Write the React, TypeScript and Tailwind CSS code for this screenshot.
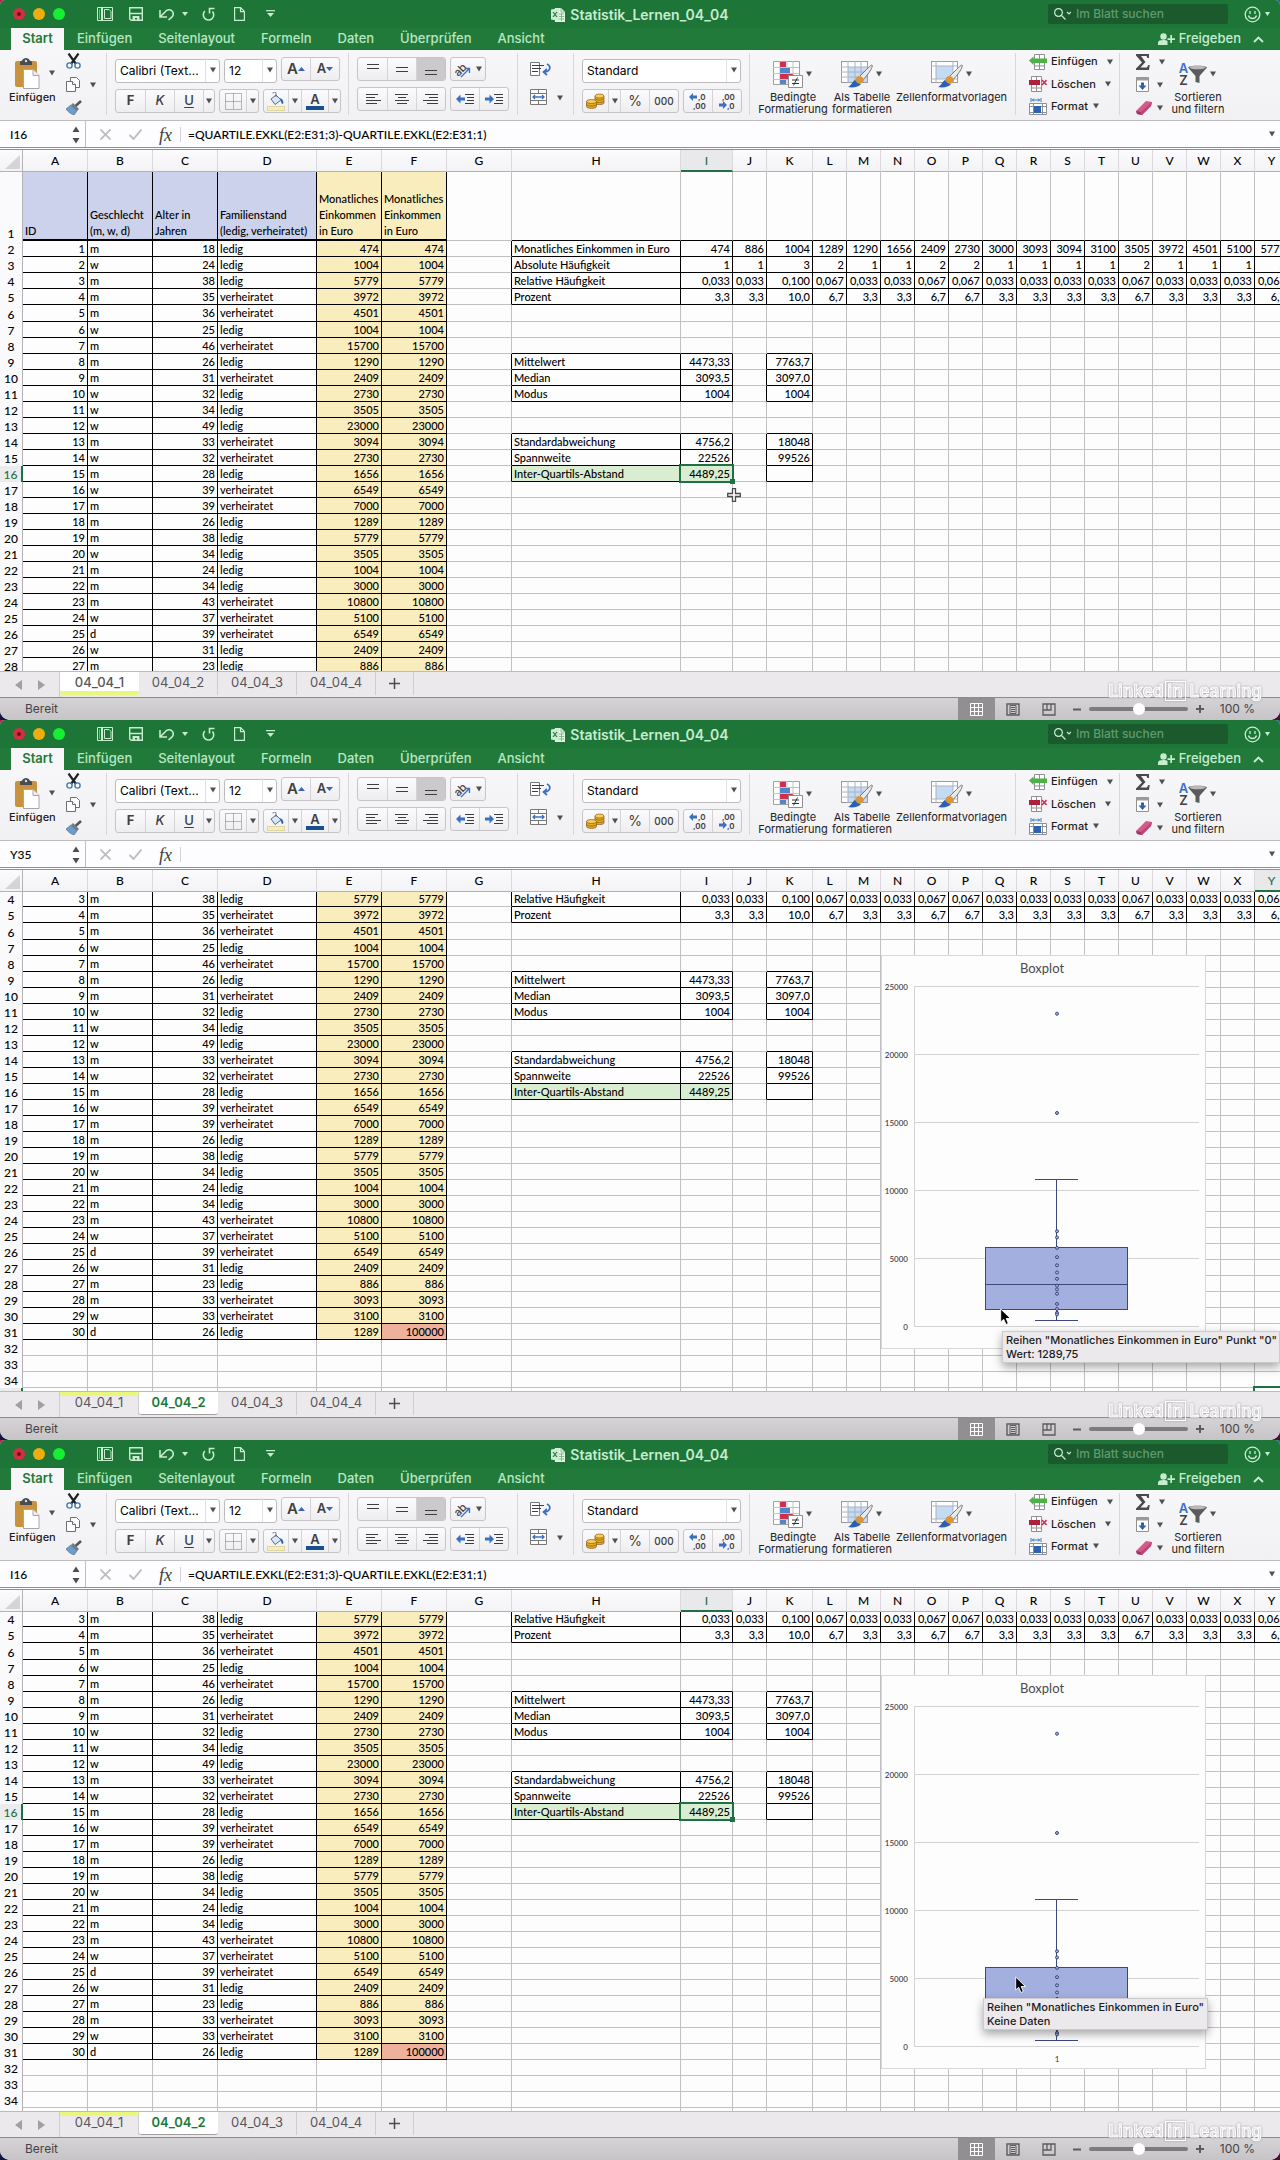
import type { ReactNode } from "react";

type Tip = { lines: string[]; className: string };

type WindowState = {
  nameBox: string;
  formula: string;
  firstRow: number;
  lastRow: number;
  selected: { col: string; row: number };
  activeTab: string;
  showChart: boolean;
  tip?: Tip;
  cursor: ReactNode;
};

type CellData = {
  text?: string | number;
  align?: "left" | "right";
  fill?: "blue" | "yellow" | "green" | "red";
  boxed?: boolean;
};

const columns = [
  { id: "A", width: 65 },
  { id: "B", width: 65 },
  { id: "C", width: 65 },
  { id: "D", width: 99 },
  { id: "E", width: 65 },
  { id: "F", width: 65 },
  { id: "G", width: 65 },
  { id: "H", width: 169 },
  { id: "I", width: 52 },
  { id: "J", width: 34 },
  { id: "K", width: 46 },
  ..."LMNOPQRSTUVWXY".split("").map((id) => ({ id, width: 34 })),
];

const people: [string, number, string, number][] = [
  ["m", 18, "ledig", 474],
  ["w", 24, "ledig", 1004],
  ["m", 38, "ledig", 5779],
  ["m", 35, "verheiratet", 3972],
  ["m", 36, "verheiratet", 4501],
  ["w", 25, "ledig", 1004],
  ["m", 46, "verheiratet", 15700],
  ["m", 26, "ledig", 1290],
  ["m", 31, "verheiratet", 2409],
  ["w", 32, "ledig", 2730],
  ["w", 34, "ledig", 3505],
  ["w", 49, "ledig", 23000],
  ["m", 33, "verheiratet", 3094],
  ["w", 32, "verheiratet", 2730],
  ["m", 28, "ledig", 1656],
  ["w", 39, "verheiratet", 6549],
  ["m", 39, "verheiratet", 7000],
  ["m", 26, "ledig", 1289],
  ["m", 38, "ledig", 5779],
  ["w", 34, "ledig", 3505],
  ["m", 24, "ledig", 1004],
  ["m", 34, "ledig", 3000],
  ["m", 43, "verheiratet", 10800],
  ["w", 37, "verheiratet", 5100],
  ["d", 39, "verheiratet", 6549],
  ["w", 31, "ledig", 2409],
  ["m", 23, "ledig", 886],
  ["m", 33, "verheiratet", 3093],
  ["w", 33, "verheiratet", 3100],
  ["d", 26, "ledig", 1289],
];

const incomes = [
  474, 886, 1004, 1289, 1290, 1656, 2409, 2730, 3000, 3093, 3094, 3100, 3505,
  3972, 4501, 5100, 5779,
];
const counts = [1, 1, 3, 2, 1, 1, 2, 2, 1, 1, 1, 1, 2, 1, 1, 1, 2];
const shares = ["", "0,033", "0,067", "0,100"];
const percents = ["", "3,3", "6,7", "10,0"];

function buildCells() {
  const cells: Record<string, CellData> = {};

  const headers = [
    "ID",
    "Geschlecht\n(m, w, d)",
    "Alter in\nJahren",
    "Familienstand\n(ledig, verheiratet)",
    "Monatliches\nEinkommen\nin Euro",
    "Monatliches\nEinkommen\nin Euro",
  ];
  headers.forEach((text, i) => {
    cells[`${"ABCDEF"[i]}1`] = {
      text,
      fill: i < 4 ? "blue" : "yellow",
      boxed: true,
    };
  });

  people.forEach(([sex, age, status, income], i) => {
    const row = i + 2;
    cells[`A${row}`] = { text: i + 1, align: "right", boxed: true };
    cells[`B${row}`] = { text: sex, boxed: true };
    cells[`C${row}`] = { text: age, align: "right", boxed: true };
    cells[`D${row}`] = { text: status, boxed: true };
    cells[`E${row}`] = {
      text: income,
      align: "right",
      fill: "yellow",
      boxed: true,
    };
    cells[`F${row}`] = {
      text: row === 31 ? 100000 : income,
      align: "right",
      fill: row === 31 ? "red" : "yellow",
      boxed: true,
    };
  });

  incomes.forEach((income, i) => {
    const col = columns[i + 8].id;
    const n = counts[i];
    cells[`${col}2`] = { text: income, align: "right", boxed: true };
    cells[`${col}3`] = { text: n, align: "right", boxed: true };
    cells[`${col}4`] = { text: shares[n], align: "right", boxed: true };
    cells[`${col}5`] = { text: percents[n], align: "right", boxed: true };
  });

  const labels: [number, string][] = [
    [2, "Monatliches Einkommen in Euro"],
    [3, "Absolute Häufigkeit"],
    [4, "Relative Häufigkeit"],
    [5, "Prozent"],
  ];
  labels.forEach(([row, text]) => (cells[`H${row}`] = { text, boxed: true }));

  const stats: [number, string, string, string][] = [
    [9, "Mittelwert", "4473,33", "7763,7"],
    [10, "Median", "3093,5", "3097,0"],
    [11, "Modus", "1004", "1004"],
    [14, "Standardabweichung", "4756,2", "18048"],
    [15, "Spannweite", "22526", "99526"],
    [16, "Inter-Quartils-Abstand", "4489,25", ""],
  ];
  stats.forEach(([row, label, first, second]) => {
    const fill = row === 16 ? "green" : undefined;
    cells[`H${row}`] = { text: label, fill, boxed: true };
    cells[`I${row}`] = { text: first, align: "right", fill, boxed: true };
    cells[`K${row}`] = { text: second, align: "right", boxed: true };
  });

  return cells;
}

const cells = buildCells();

const fills = {
  blue: "bg-[#ccd2ec]",
  yellow: "bg-[#f9edbd]",
  green: "bg-[#d9edd0]",
  red: "bg-[#edb19c]",
};

/* ---------- small parts ---------- */

function Caret() {
  return (
    <svg width="8" height="6" viewBox="0 0 8 6" className="shrink-0">
      <path d="M1 0.5h6L4 5.5z" fill="#505050" />
    </svg>
  );
}

function Group({
  className,
  children,
}: {
  className: string;
  children: ReactNode;
}) {
  return (
    <div
      className={`flex h-[62px] shrink-0 border-r border-[#d9d7da] ${className}`}
    >
      {children}
    </div>
  );
}

function ButtonBar({ children }: { children: ReactNode }) {
  return (
    <div className="flex h-6 overflow-hidden rounded-[3px] border border-[#c6c4c7] bg-linear-to-b from-[#fbfafc] to-[#eeedef]">
      {children}
    </div>
  );
}

function BarButton({
  label,
  className = "w-[29px]",
  children,
}: {
  label: string;
  className?: string;
  children: ReactNode;
}) {
  return (
    <button
      aria-label={label}
      className={`flex items-center justify-center border-[#d5d3d6] not-first:border-l ${className}`}
    >
      {children}
    </button>
  );
}

function Select({
  label,
  value,
  className,
}: {
  label: string;
  value: string;
  className: string;
}) {
  return (
    <div className={`relative ${className}`}>
      <select
        aria-label={label}
        className="h-6 w-full appearance-none rounded-[3px] border border-[#bdbbbe] bg-white pl-1 text-xs text-black"
      >
        <option>{value}</option>
      </select>
      <span className="pointer-events-none absolute inset-y-px right-px flex w-[14px] items-center justify-center border-l border-[#e2e0e3]">
        <Caret />
      </span>
    </div>
  );
}

function Lines({ rows }: { rows: [number, number, number][] }) {
  return (
    <svg width="16" height="18" viewBox="0 0 16 18">
      {rows.map(([x1, x2, y]) => (
        <path key={y} d={`M${x1} ${y}.5H${x2}`} stroke="#3d3d3d" />
      ))}
    </svg>
  );
}

function IndentIcon({ flip }: { flip?: boolean }) {
  return (
    <svg width="18" height="12" viewBox="0 0 18 12">
      <path d="M9 1.5h9M11 4.5h7M11 7.5h7M9 10.5h9" stroke="#3d3d3d" />
      <path
        d={
          flip
            ? "M9 6 4.5 1.5v3H0v3h4.5v3z"
            : "M0 6l4.5-4.5v3H9v3H4.5v3z"
        }
        fill="#3a70c4"
      />
    </svg>
  );
}

function BrushOverlay() {
  return (
    <g>
      <path
        d="M31 5c1 1-1 5-4 9l-5 6-4-3 6-6c3-3 6-6 7-6z"
        fill="#e9e9ea"
        stroke="#77777a"
      />
      <path d="M18 16c2 0 5 2 5 4s-3 4-5 4-4-1-4-3 2-5 4-5z" fill="#d9963a" />
      <path d="M14 20c1 2 3 4 6 4-2 3-8 4-13 3 3-1 4-5 7-7z" fill="#2a5fb8" />
    </g>
  );
}

function TableStyleIcon({ inner }: { inner?: boolean }) {
  return (
    <svg width="32" height="29" viewBox="0 0 32 29">
      <rect x="0.5" y="1.5" width="26" height="21" fill="#fff" stroke="#9b9b9e" />
      <path
        d={inner ? "M5 6h17v13H5z" : "M7 7h19v15H7z"}
        fill="#c4dbf3"
      />
      <path
        d={
          inner
            ? "M5 1v22M22 1v22M0 6h26M0 19h26"
            : "M7 1v22M14 1v22M20 1v22M0 7h26M0 12h26M0 17h26"
        }
        stroke="#a9b4c0"
        fill="none"
      />
      <BrushOverlay />
    </svg>
  );
}

function BigButton({
  className,
  lines,
  children,
}: {
  className: string;
  lines: string[];
  children: ReactNode;
}) {
  return (
    <button className={`flex flex-col items-center pt-1 ${className}`}>
      <span className="flex h-[34px] items-center gap-[2px]">
        {children}
        <Caret />
      </span>
      {lines.map((line) => (
        <span key={line} className="text-[11px] leading-3 whitespace-nowrap">
          {line}
        </span>
      ))}
    </button>
  );
}

/* ---------- title bar and ribbon tabs ---------- */

function TitleBar() {
  return (
    <header className="relative flex h-7 shrink-0 items-center bg-[#1d7537] pl-[13px] text-[#c8ecd0]">
      <div className="flex gap-2">
        <button
          aria-label="Schließen"
          className="flex size-3 items-center justify-center rounded-full bg-[#d22f45]"
        >
          <span className="size-1 rounded-full bg-[#6d0d18]" />
        </button>
        <button
          aria-label="Minimieren"
          className="size-3 rounded-full bg-[#efad12]"
        />
        <button
          aria-label="Maximieren"
          className="size-3 rounded-full bg-[#16ee34]"
        />
      </div>

      <div className="ml-8 flex items-center">
        <button aria-label="Layout" className="w-8">
          <svg width="16" height="14" viewBox="0 0 16 14" fill="none" stroke="currentColor">
            <path d="M0.5 0.5h15v13H0.5z" />
            <path d="M2.5 2.5v9" strokeDasharray="1 1" />
            <path d="M5 0v14" strokeWidth="2" />
            <path d="M8 2.5h4l2 2v7H7.5v-9z" />
          </svg>
        </button>
        <button aria-label="Speichern" className="w-[30px]">
          <svg width="14" height="14" viewBox="0 0 14 14">
            <path d="M0.7 0.7h12.6v12.6H2.2L0.7 12z" fill="none" stroke="currentColor" strokeWidth="1.4" />
            <path d="M1 6.5h12" stroke="currentColor" strokeWidth="1.5" />
            <path d="M3.5 9h7v4.5H8V11H6v2.5H3.5z" fill="currentColor" />
          </svg>
        </button>
        <button aria-label="Rückgängig" className="flex w-[43px] items-center gap-2">
          <svg width="15" height="13" viewBox="0 0 15 13" fill="none" stroke="currentColor" strokeWidth="1.6">
            <path d="M1 2v7h7M1.5 8.500 6 4C8 1.500 11 1 13 3s1.500 5-.5 6.500L9.500 12" />
          </svg>
          <svg width="6" height="4" viewBox="0 0 6 4">
            <path d="M0 0h6L3 4z" fill="currentColor" />
          </svg>
        </button>
        <button aria-label="Wiederholen" className="w-8">
          <svg width="13" height="14" viewBox="0 0 13 14" fill="none" stroke="currentColor" strokeWidth="1.6">
            <path d="M3 4A5.200 5.200 0 1 0 10.500 4.500M7.500 6.500V1.500H12.500" />
          </svg>
        </button>
        <button aria-label="Neu" className="w-8">
          <svg width="11" height="14" viewBox="0 0 11 14" fill="none" stroke="currentColor" strokeWidth="1.2">
            <path d="M0.600 0.600h6L10.400 4.500v8.900H0.600zM6.500 0.600v4h4" />
          </svg>
        </button>
        <button aria-label="Anpassen">
          <svg width="10" height="8" viewBox="0 0 10 8">
            <path d="M0 0.700h9" stroke="currentColor" strokeWidth="1.2" />
            <path d="M1 3h7L4.500 7z" fill="currentColor" />
          </svg>
        </button>
      </div>

      {/* the title is centred on the window, over whatever stands left and right */}
      <h1 className="pointer-events-none absolute inset-0 flex items-center justify-center gap-1 pt-px text-sm font-semibold">
        <svg width="15" height="15" viewBox="0 0 15 15">
          <path d="M4 1h6l4 4v10H4z" fill="#e6f5e8" />
          <path d="M10 1v4h4M8 7h5M8 9.500h5M8 12h5M10.500 6v8" stroke="#7fbf8e" fill="none" />
          <path d="M0 2.500 8 1v13l-8-1.500z" fill="#cfead4" />
          <path d="m2 5 4 5M6 5l-4 5" stroke="#217a3a" strokeWidth="1.2" />
        </svg>
        Statistik_Lernen_04_04
      </h1>

      <div className="relative ml-auto flex items-center pr-[10px]">
        <label className="mr-4 flex h-5 w-[180px] items-center gap-[5px] rounded-[2px] bg-[#1b5a2d] pl-[6px]">
          <svg width="17" height="12" viewBox="0 0 17 12" fill="none" stroke="currentColor" strokeWidth="1.2">
            <circle cx="4.500" cy="4.500" r="3.900" />
            <path d="m7.500 7.500 4 4M13 4l2 2 2-2" />
          </svg>
          <input
            aria-label="Im Blatt suchen"
            placeholder="Im Blatt suchen"
            className="w-32 bg-transparent text-xs font-medium outline-none placeholder:text-[#5f9a6d]"
          />
        </label>
        <button aria-label="Feedback" className="flex items-center gap-1">
          <svg width="17" height="17" viewBox="0 0 17 17" fill="none" stroke="currentColor" strokeWidth="1.3">
            <circle cx="8.500" cy="8.500" r="7.300" />
            <path d="M6 5v3M11 5v3M4.500 9.500c1 4 7 4 8 0" />
          </svg>
          <svg width="5" height="4" viewBox="0 0 5 4">
            <path d="M0 0h5L2.500 4z" fill="currentColor" />
          </svg>
        </button>
      </div>
    </header>
  );
}

function RibbonTabs() {
  const tabs = [
    "Einfügen",
    "Seitenlayout",
    "Formeln",
    "Daten",
    "Überprüfen",
    "Ansicht",
  ];

  return (
    <nav className="flex h-[22px] shrink-0 items-center bg-[#217a3a] pr-4 pl-[11px] text-[13px] font-medium text-[#b9e6c2]">
      <button className="h-full w-[53px] bg-[#f7f6f8] font-semibold text-[#217a3a]">
        Start
      </button>
      {tabs.map((tab) => (
        <button key={tab} className="h-full px-[13px]">
          {tab}
        </button>
      ))}
      <button className="ml-auto flex items-center gap-1 text-[#c8ecd0]">
        <svg width="17" height="13" viewBox="0 0 17 13" fill="currentColor">
          <circle cx="5.500" cy="3.500" r="3.200" />
          <path d="M0 12V9.500C0 7.800 2 7 5.500 7c1.500 0 3 .3 4 1v4z" />
          <path d="M12.300 2h1.700v3.200h3v1.700h-3V10h-1.700V6.900H9.500V5.200h2.800z" />
        </svg>
        Freigeben
      </button>
      <button aria-label="Menüband reduzieren" className="ml-3">
        <svg width="11" height="7" viewBox="0 0 11 7" fill="none" stroke="#c8ecd0" strokeWidth="1.8">
          <path d="m1 6 4.500-4.500L10 6" />
        </svg>
      </button>
    </nav>
  );
}

/* ---------- ribbon ---------- */

function ClipboardGroup() {
  return (
    <Group className="w-[107px] pl-[9px]">
      <button className="flex w-[46px] flex-col pt-[2px]">
        <span className="flex h-[36px] items-center gap-2 pl-[6px]">
          <svg width="25" height="31" viewBox="0 0 25 31" className="shrink-0">
            <rect x="0" y="3" width="22" height="26" rx="2" fill="#c8923f" />
            <path d="M5 3.500C7 3.500 8 0 11 0s4 3.500 6 3.500V7H5z" fill="#4c4c4e" />
            <circle cx="11" cy="3" r="1.200" fill="#ddd" />
            <path d="M8.500 11.500H18l6 6v13H8.500z" fill="#fff" stroke="#a7a7a7" />
            <path d="M18 11.500v6h6" fill="#eee" stroke="#a7a7a7" />
          </svg>
          <Caret />
        </span>
        <span className="text-[11px] leading-3 font-medium">Einfügen</span>
      </button>
      <div className="flex flex-col items-start gap-2 pl-[11px]">
        <button aria-label="Ausschneiden">
          <svg width="15" height="16" viewBox="0 0 15 16" fill="none">
            <path d="M2.500 0.500 10 11M12.500 0.500 5 11" stroke="#222" strokeWidth="2.2" />
            <circle cx="3.500" cy="12.500" r="2.600" stroke="#3f78b5" strokeWidth="1.4" />
            <circle cx="11.500" cy="12.500" r="2.600" stroke="#3f78b5" strokeWidth="1.4" />
          </svg>
        </button>
        <button aria-label="Kopieren" className="flex items-center gap-2">
          <svg width="15" height="15" viewBox="0 0 15 15" fill="#fff" stroke="#6d6d6f">
            <path d="M4.500 0.500h6l3 3v7h-9z" />
            <path d="M0.500 4.500h6l3 3v7h-9z" />
            <path d="M6.500 4.500v3h3" />
          </svg>
          <Caret />
        </button>
        <button aria-label="Format übertragen">
          <svg width="16" height="15" viewBox="0 0 16 15">
            <path d="M15 1 9.500 6" stroke="#555" strokeWidth="2.5" />
            <path d="m7 3 6 6-2 2-6-6z" fill="#77797d" />
            <path d="m5 5 6 6-3 4c-3-1-6-3-8-6z" fill="#6e9cc9" stroke="#46658a" strokeWidth="0.6" />
          </svg>
        </button>
      </div>
    </Group>
  );
}

function FontGroup() {
  return (
    <Group className="w-[242px] flex-col gap-[6px] pt-1 pl-2">
      <div className="flex gap-1">
        <Select label="Schriftart" value="Calibri (Text..." className="w-[105px]" />
        <Select label="Schriftgrad" value="12" className="w-[53px]" />
        <ButtonBar>
          <BarButton label="Schrift vergrößern" className="w-[28px]">
            <span className="text-[15px] font-semibold text-[#404042]">A</span>
            <svg width="7" height="4" viewBox="0 0 7 4">
              <path d="M0 4h7L3.500 0z" fill="#3f62b0" />
            </svg>
          </BarButton>
          <BarButton label="Schrift verkleinern" className="w-[29px]">
            <span className="text-[13px] font-semibold text-[#404042]">A</span>
            <svg width="7" height="4" viewBox="0 0 7 4">
              <path d="M0 0h7L3.500 4z" fill="#3f62b0" />
            </svg>
          </BarButton>
        </ButtonBar>
      </div>
      <div className="flex gap-1">
        <ButtonBar>
          <BarButton label="Fett">
            <b className="text-[13px] text-[#404042]">F</b>
          </BarButton>
          <BarButton label="Kursiv">
            <i className="text-[13px] font-medium text-[#404042]">K</i>
          </BarButton>
          <BarButton label="Unterstrichen">
            <u className="text-[13px] font-medium text-[#404042] underline-offset-2">
              U
            </u>
          </BarButton>
          <BarButton label="Unterstreichungsart" className="w-[11px]">
            <Caret />
          </BarButton>
        </ButtonBar>
        <ButtonBar>
          <BarButton label="Rahmen" className="w-[26px]">
            <svg width="17" height="17" viewBox="0 0 17 17" fill="none" stroke="#77777a">
              <path d="M0.500 0.500h16v16H0.500zM8.500 0.500v16M0.500 8.500h16" strokeDasharray="1 1" />
            </svg>
          </BarButton>
          <BarButton label="Rahmenart" className="w-[12px]">
            <Caret />
          </BarButton>
        </ButtonBar>
        <ButtonBar>
          <BarButton label="Füllfarbe" className="w-[24px]">
            <svg width="18" height="19" viewBox="0 0 18 19">
              <path d="m4 7 5-4 5 5-6 4.500z" fill="#dce6f2" stroke="#4d6f98" />
              <path d="M9 5V1.500a1.500 1.500 0 0 0-3 0" fill="none" stroke="#4d6f98" />
              <path d="M13 6c3 1 4 4 3 6-2 0-2-3-3-6z" fill="#2f6cc0" />
              <rect x="0.5" y="14.5" width="17" height="4" fill="#f8eeb2" stroke="#ded7a5" />
            </svg>
          </BarButton>
          <BarButton label="Füllfarbe wählen" className="w-[13px]">
            <Caret />
          </BarButton>
          <BarButton label="Schriftfarbe" className="w-[27px] flex-col">
            <span className="text-[13px] leading-[13px] font-semibold text-[#404042]">
              A
            </span>
            <span className="h-1 w-[18px] bg-[#17508f]" />
          </BarButton>
          <BarButton label="Schriftfarbe wählen" className="w-[12px]">
            <Caret />
          </BarButton>
        </ButtonBar>
      </div>
    </Group>
  );
}

function AlignGroup() {
  return (
    <Group className="w-[169px] flex-col gap-[6px] pt-1 pl-2">
      <div className="flex gap-1">
        <ButtonBar>
          <BarButton label="Oben">
            <Lines rows={[[2, 14, 4], [2, 14, 8]]} />
          </BarButton>
          <BarButton label="Mitte">
            <Lines rows={[[2, 14, 7], [2, 14, 11]]} />
          </BarButton>
          <BarButton label="Unten" className="w-[29px] bg-[#cbc9cc]">
            <Lines rows={[[2, 14, 10], [2, 14, 14]]} />
          </BarButton>
        </ButtonBar>
        <ButtonBar>
          <BarButton label="Ausrichtung" className="w-[34px] gap-1">
            <svg width="17" height="17" viewBox="0 0 17 17">
              <text x="0" y="12" fontSize="11" fontWeight="500" fill="#404042" transform="rotate(-45 7 9)">
                ab
              </text>
              <path d="m7 16 8-8M11 7.500h4.500V12" fill="none" stroke="#3a70c4" strokeWidth="1.3" />
            </svg>
            <Caret />
          </BarButton>
        </ButtonBar>
      </div>
      <div className="flex gap-1">
        <ButtonBar>
          <BarButton label="Linksbündig">
            <Lines rows={[[1, 13, 4], [1, 10, 7], [1, 16, 10], [1, 12, 13]]} />
          </BarButton>
          <BarButton label="Zentriert">
            <Lines rows={[[1, 14, 4], [4, 12, 7], [1, 15, 10], [3, 13, 13]]} />
          </BarButton>
          <BarButton label="Rechtsbündig">
            <Lines rows={[[2, 15, 4], [6, 15, 7], [0, 15, 10], [4, 15, 13]]} />
          </BarButton>
        </ButtonBar>
        <ButtonBar>
          <BarButton label="Einzug verkleinern" className="w-[28px]">
            <IndentIcon />
          </BarButton>
          <BarButton label="Einzug vergrößern" className="w-[29px]">
            <IndentIcon flip />
          </BarButton>
        </ButtonBar>
      </div>
    </Group>
  );
}

function WrapGroup() {
  return (
    <Group className="w-14 flex-col gap-[12px] pt-[8px] pl-[12px]">
      <button aria-label="Textumbruch" className="h-4">
        <svg width="21" height="14" viewBox="0 0 21 14" fill="none">
          <path d="M0.500 0.500h9v13h-9z" fill="#fff" stroke="#77777a" />
          <path d="M2 3.500h12M2 6.500h9M2 9.500h6" stroke="#404042" />
          <path d="M17 2c4 2 4 7-2 8M17 7l-3.500 3 3.500 3" stroke="#3a70c4" strokeWidth="1.7" />
        </svg>
      </button>
      <button aria-label="Verbinden" className="flex items-center gap-2">
        <svg width="18" height="17" viewBox="0 0 18 17" fill="none" stroke="#77777a">
          <path d="M0.500 0.500h16v15H0.500zM0.500 4.500h16M0.500 11.500h16M8.500 0.500v4M8.500 11.500v4" fill="#fff" />
          <path d="M3 8h11M5 6 3 8l2 2M12 6l2 2-2 2" stroke="#3a70c4" strokeWidth="1.3" />
        </svg>
        <Caret />
      </button>
    </Group>
  );
}

function NumberGroup() {
  return (
    <Group className="w-[176px] flex-col gap-[6px] pt-1 pl-2">
      <Select label="Zahlenformat" value="Standard" className="w-[159px]" />
      <div className="flex gap-1">
        <ButtonBar>
          <BarButton label="Währung" className="w-[25px]">
            <svg width="19" height="16" viewBox="0 0 19 16" fill="#e5a928" stroke="#8a5a10" strokeWidth="0.7">
              <path d="M9 3v7c0 2 9 2 9 0V3z" />
              <ellipse cx="13.500" cy="3" rx="4.500" ry="2" fill="#f6cf58" />
              <path d="M9 5.500c1 2 8 2 9 0M9 8c1 2 8 2 9 0" fill="none" />
              <path d="M0.500 8.500v5c0 2.500 10 2.500 10 0v-5z" />
              <ellipse cx="5.500" cy="8.500" rx="5" ry="2" fill="#f6cf58" />
              <path d="M0.500 11.500c1 2 9 2 10 0" fill="none" />
            </svg>
          </BarButton>
          <BarButton label="Währungsart" className="w-[12px]">
            <Caret />
          </BarButton>
          <BarButton label="Prozentformat">
            <span className="text-sm text-[#404042]">%</span>
          </BarButton>
          <BarButton label="Tausendertrennzeichen">
            <span className="text-[10px] font-medium text-[#404042]">000</span>
          </BarButton>
        </ButtonBar>
        <ButtonBar>
          <BarButton label="Dezimalstelle hinzufügen" className="w-[28px]">
            <svg width="18" height="17" viewBox="0 0 18 17" fontSize="8" fontWeight="600">
              <path d="m0 4 4-4v2.500h4v3H4V8z" fill="#3a70c4" />
              <text x="9" y="7" fill="#404042">,0</text>
              <text x="4" y="16" fill="#404042">,00</text>
            </svg>
          </BarButton>
          <BarButton label="Dezimalstelle entfernen" className="w-[29px]">
            <svg width="18" height="17" viewBox="0 0 18 17" fontSize="8" fontWeight="600">
              <path d="m9 12-4-4v2.500H1v3h4V16z" fill="#3a70c4" />
              <text x="4" y="7" fill="#404042">,00</text>
              <text x="9" y="16" fill="#404042">,0</text>
            </svg>
          </BarButton>
        </ButtonBar>
      </div>
    </Group>
  );
}

function StyleGroup() {
  return (
    <Group className="w-[266px] pl-[9px]">
      <BigButton className="w-[68px]" lines={["Bedingte", "Formatierung"]}>
        <svg width="30" height="29" viewBox="0 0 30 29">
          <path d="M0.500 1.500h26v23h-26z" fill="#fff" stroke="#a0a0a3" />
          <path d="M0 7.500h26M0 13.500h26M0 19.500h26M7 1v23M14 1v23M20 1v23" stroke="#c2c2c5" />
          <path d="M7 2h6v5H7z" fill="#c8324f" />
          <path d="M7 8h10v5H7z" fill="#4f86d0" />
          <path d="M7 14h13v5H7z" fill="#c8324f" />
          <path d="M7 20h6v4H7z" fill="#4f86d0" />
          <path d="M15.500 15.500h14v12h-14z" fill="#fff" stroke="#8f8f92" />
          <path d="M19 20h7M19 23.500h7M24.500 17.500l-4 8" stroke="#333" />
        </svg>
      </BigButton>
      <BigButton className="w-[70px]" lines={["Als Tabelle", "formatieren"]}>
        <TableStyleIcon />
      </BigButton>
      <BigButton className="w-[109px]" lines={["Zellenformatvorlagen"]}>
        <TableStyleIcon inner />
      </BigButton>
    </Group>
  );
}

function CellsGroup() {
  return (
    <Group className="w-[104px] flex-col gap-[5px] pl-[13px] text-[11px] font-medium">
      <button className="flex h-[18px] items-center gap-1">
        <svg width="18" height="16" viewBox="0 0 18 16">
          <path d="M5.500 0.500h10v15h-10zM10.500 0.500v15M5.500 12h10" fill="#fff" stroke="#8f8f92" />
          <path d="m0 6.500 4.500-4v2H18v4.500H4.500v2z" fill="#4cb245" />
        </svg>
        Einfügen
        <span className="pl-1">
          <Caret />
        </span>
      </button>
      <button className="flex h-[18px] items-center gap-1">
        <svg width="18" height="16" viewBox="0 0 18 16">
          <path d="M2.500 0.500h10v15h-10zM7.500 0.500v15M2.500 12h10" fill="#fff" stroke="#8f8f92" />
          <path d="M0 4h11v5H0z" fill="#b01f3c" />
          <path d="m13 4 4.500 5M17.500 4 13 9" stroke="#c8324f" strokeWidth="1.6" />
        </svg>
        Löschen
        <span className="pl-1">
          <Caret />
        </span>
      </button>
      <button className="flex h-[18px] items-center gap-1">
        <svg width="18" height="17" viewBox="0 0 18 17">
          <path d="M0.500 5.500h17v11h-17zM4.500 5v12M13.500 5v12M0 8.500h18M0 14.500h18" fill="#fff" stroke="#8f8f92" />
          <path d="M5 8h7v7H5z" fill="#2f62ae" />
          <path d="M2 0v4M12 0v4M3 2h8M5 0.500 3.500 2 5 3.500M9 0.500 10.500 2 9 3.500" fill="none" stroke="#3f78c5" />
        </svg>
        Format
        <Caret />
      </button>
    </Group>
  );
}

function EditGroup() {
  return (
    <div className="flex shrink-0 pl-4">
      <div className="flex w-8 flex-col gap-[7px] pt-px">
        <button aria-label="AutoSumme" className="flex h-4 items-center gap-2">
          <svg width="14" height="16" viewBox="0 0 14 16">
            <path d="M0 0h13v4h-1.500L10.500 2H5l4.500 6L4.500 13.500H11l1.200-2.500h1.500L13 16H0v-1.500L6 8.500 0 1.500z" fill="#4a4a4c" />
          </svg>
          <Caret />
        </button>
        <button aria-label="Ausfüllen" className="flex h-4 items-center gap-[6px]">
          <svg width="14" height="16" viewBox="0 0 14 16">
            <path d="M0.500 0.500h12v14h-12z" fill="#fff" stroke="#8f8f92" />
            <path d="M0.500 0.500h12v3h-12z" fill="#9c9c9f" />
            <path d="M5 5.500h3v3h2.500l-4 4.500-4-4.500H5z" fill="#2f62ae" />
          </svg>
          <Caret />
        </button>
        <button aria-label="Löschen" className="flex h-4 items-center gap-1">
          <svg width="16" height="16" viewBox="0 0 16 16">
            <path d="M0 11 10 1l6 1-1 4-9 9-5-1z" fill="#d4588c" />
            <path d="m0 11 5 1 1 3-5-1z" fill="#9c3863" />
            <path d="m5 12 11-10-1 4-9 9z" fill="#b94576" />
          </svg>
          <Caret />
        </button>
      </div>
      <BigButton className="w-[60px]" lines={["Sortieren", "und filtern"]}>
        <span className="flex items-center">
          <span className="flex flex-col text-[13px] leading-3 font-semibold">
            <span className="text-[#3a70c4]">A</span>
            <span className="text-[#404042]">Z</span>
          </span>
          <svg width="19" height="20" viewBox="0 0 19 20">
            <path d="M0 3.500C1 1 18 1 19 3.500L11.500 12v7l-4-1v-6z" fill="#5b5b5e" />
            <ellipse cx="9.500" cy="3.500" rx="8" ry="1.700" fill="#b9b9bc" />
          </svg>
        </span>
      </BigButton>
    </div>
  );
}

function Ribbon() {
  return (
    <div className="flex h-[71px] shrink-0 overflow-hidden border-b border-[#bebcbf] bg-linear-to-b from-[#f7f6f8] to-[#f1f0f2] pt-[3px]">
      <ClipboardGroup />
      <FontGroup />
      <AlignGroup />
      <WrapGroup />
      <NumberGroup />
      <StyleGroup />
      <CellsGroup />
      <EditGroup />
    </div>
  );
}

function FormulaBar({ nameBox, formula }: { nameBox: string; formula: string }) {
  return (
    <div className="flex h-[29px] shrink-0 items-center border-b-3 border-double border-[#918f92] bg-[#fdfcfe]">
      <div className="flex h-full w-[86px] items-center border-r border-[#bebcbf] pt-px pl-[10px]">
        <input
          aria-label="Namenfeld"
          defaultValue={nameBox}
          className="w-[62px] bg-transparent font-[Lato] text-xs font-medium text-black outline-none"
        />
        <svg width="8" height="18" viewBox="0 0 8 18">
          <path d="M4 0.500 7.500 6h-7zM4 17.500 7.500 12h-7z" fill="#4d4d4f" />
        </svg>
      </div>
      <div className="flex items-center pt-px pl-[14px]">
        <button aria-label="Abbrechen" className="w-[29px]">
          <svg width="11" height="11" viewBox="0 0 11 11" stroke="#bdbbbe" strokeWidth="1.8">
            <path d="m0.500 0.500 10 10M10.500 0.500l-10 10" />
          </svg>
        </button>
        <button aria-label="Eingeben" className="w-[30px]">
          <svg width="13" height="11" viewBox="0 0 13 11" fill="none" stroke="#bdbbbe" strokeWidth="1.8">
            <path d="M0.500 6 4.500 10l8-9.500" />
          </svg>
        </button>
        <button
          aria-label="Funktion einfügen"
          className="w-[21px] text-left font-['Liberation_Serif'] text-lg leading-5 text-[#3d3d3f] italic"
        >
          fx
        </button>
      </div>
      <div className="flex flex-1 pt-px">
        <input
          aria-label="Formel"
          defaultValue={formula}
          className="h-[15px] min-w-0 flex-1 border-l border-[#d6d4d7] bg-transparent pl-[7px] font-[Lato] text-xs font-medium text-black outline-none"
        />
      </div>
      <button aria-label="Bearbeitungsleiste erweitern" className="pr-1">
        <Caret />
      </button>
    </div>
  );
}

/* ---------- sheet ---------- */

function rowHeight(row: number, firstRow: number) {
  if (row === 1) return "h-[69px]";
  if (row === 6) return "h-[17px]";
  if (row === firstRow) return "h-[15px]";
  return "h-4";
}

function SheetCell({
  col,
  row,
  selected,
}: {
  col: number;
  row: number;
  selected: boolean;
}) {
  const id = columns[col].id;
  const cell = cells[`${id}${row}`];
  const right = cells[`${columns[col + 1]?.id}${row}`];
  const below = cells[`${id}${row + 1}`];

  const classes = [
    "border-r",
    cell?.boxed || right?.boxed ? "border-r-black" : "border-r-[#c2c0c3]",
    row === 1 && cell ? "border-b-2" : "border-b",
    cell?.boxed || below?.boxed ? "border-b-black" : "border-b-[#c2c0c3]",
    cell?.align === "right" ? "text-right" : "text-left",
    row === 1 ? "align-bottom leading-4 whitespace-pre" : "align-middle",
    cell?.fill ? fills[cell.fill] : "",
    selected ? "relative" : "",
  ];

  return (
    <td className={`px-[2px] py-0 ${classes.join(" ")}`}>
      {cell?.text}
      {selected && (
        <span className="absolute -inset-[2px] border-2 border-[#1f7045]">
          <span className="absolute -right-[3px] -bottom-[3px] size-[5px] bg-[#1f7045]" />
        </span>
      )}
    </td>
  );
}

function Sheet({ state }: { state: WindowState }) {
  const { firstRow, lastRow, selected } = state;
  const rows = Array.from(
    { length: lastRow - firstRow + 1 },
    (_, i) => firstRow + i,
  );

  return (
    <table className="w-[1289px] table-fixed border-separate border-spacing-0 font-[Lato] text-[11px] leading-[14px] font-medium whitespace-nowrap text-black">
      <colgroup>
        <col style={{ width: 23 }} />
        {columns.map((col) => (
          <col key={col.id} style={{ width: col.width }} />
        ))}
      </colgroup>
      <thead>
        <tr className="h-[22px] bg-linear-to-b from-[#fbfafc] to-[#f3f2f4]">
          <th className="border-r border-b border-[#b3b1b4] p-0">
            <svg width="22" height="20" viewBox="0 0 22 20">
              <path d="M20 4v14H5z" fill="#d5d3d6" />
            </svg>
          </th>
          {columns.map((col) => (
            <th
              key={col.id}
              scope="col"
              className={
                col.id === selected.col
                  ? "border-r border-b-2 border-r-[#dad8db] border-b-[#1f7045] bg-[#e9e8ea] p-0 pt-[2px] text-xs font-medium text-[#1f7045]"
                  : "border-r border-b border-r-[#dad8db] border-b-[#b3b1b4] p-0 pt-px text-xs font-medium"
              }
            >
              {col.id}
            </th>
          ))}
        </tr>
      </thead>
      <tbody>
        {rows.map((row) => (
          <tr key={row} className={rowHeight(row, firstRow)}>
            <th
              scope="row"
              className={
                row === selected.row
                  ? "border-r-2 border-[#1f7045] bg-[#ecebed] p-0 align-bottom text-xs leading-[14px] font-medium text-[#1f7045]"
                  : "border-r border-[#b3b1b4] bg-[#faf9fb] p-0 align-bottom text-xs leading-[14px] font-medium"
              }
            >
              {row}
            </th>
            {columns.map((col, i) => (
              <SheetCell
                key={col.id}
                col={i}
                row={row}
                selected={col.id === selected.col && row === selected.row}
              />
            ))}
          </tr>
        ))}
      </tbody>
    </table>
  );
}

// value axis: 0 at y=371.5, 340px for 25000
const yOf = (value: number) => 371.5 - (value * 340) / 25000;

function BoxPlot() {
  const values = [...new Set(people.map((p) => p[3]))].filter(
    (v) => ![474, 1289, 3093, 3094, 3100, 10800].includes(v),
  );

  return (
    <svg
      width="325"
      height="394"
      viewBox="0 0 325 394"
      className="absolute top-[85px] left-[881px] bg-[#fdfdfe] font-[Lato]"
    >
      <rect x="0.5" y="0.5" width="324" height="393" fill="none" stroke="#d8d8da" />
      <text x="161" y="18" fontSize="13" textAnchor="middle" fill="#4a4a4c">
        Boxplot
      </text>
      {[0, 5000, 10000, 15000, 20000, 25000].map((tick) => (
        <g key={tick}>
          <path d={`M33.500 ${yOf(tick)}H318`} stroke="#d3d2d4" />
          <text
            x="27"
            y={yOf(tick) + 3}
            fontSize="8"
            fontWeight="500"
            textAnchor="end"
            fill="#3a3a3c"
          >
            {tick}
          </text>
        </g>
      ))}
      <path d="M33.500 31.500V371.500" stroke="#d3d2d4" />
      <g stroke="#3c487c" fill="none">
        <path d="M154 224.500h43M154 365.500h43M175.500 224.500v68M175.500 354.500v11" />
        <rect x="104.5" y="292.5" width="142" height="62" fill="#a3afdf" />
        <path d="M104.500 329.500h142" />
        {values.map((value) => (
          <circle key={value} cx="176" cy={yOf(value)} r="1.5" fill="#a9b4de" />
        ))}
      </g>
      <text x="176" y="387" fontSize="8" textAnchor="middle" fill="#3a3a3c">
        1
      </text>
    </svg>
  );
}

function ArrowCursor({ className }: { className: string }) {
  return (
    <svg width="12" height="18" viewBox="0 0 12 18" className={`absolute ${className}`}>
      <path
        d="M0.700 1v13l3-2.700L6 16.500l2.300-1L6.200 10.500h4.300z"
        fill="#000"
        stroke="#fff"
        strokeWidth="0.9"
      />
    </svg>
  );
}

function CrossCursor() {
  return (
    <svg width="14" height="14" viewBox="0 0 14 14" className="absolute top-[338px] left-[727px]">
      <path
        d="M5.500 0.700h3v4.800h4.800v3H8.500v4.800h-3V8.500H0.700v-3h4.800z"
        fill="#fff"
        stroke="#4a4a4c"
        strokeWidth="1.3"
      />
    </svg>
  );
}

function SheetTabs({ activeTab }: { activeTab: string }) {
  return (
    <div className="flex h-[26px] shrink-0 border-t border-[#bcbabd] bg-[#ebe9ec] text-[13px] text-[#58565a]">
      <div className="flex w-[60px] items-center justify-center gap-4 border-r border-[#cfcdd0]">
        <button aria-label="Vorheriges Blatt">
          <svg width="7" height="10" viewBox="0 0 7 10">
            <path d="M7 0v10L0 5z" fill="#a19fa2" />
          </svg>
        </button>
        <button aria-label="Nächstes Blatt">
          <svg width="7" height="10" viewBox="0 0 7 10">
            <path d="M0 0v10l7-5z" fill="#a19fa2" />
          </svg>
        </button>
      </div>
      {["04_04_1", "04_04_2", "04_04_3", "04_04_4"].map((tab) => {
        const active = tab === activeTab;
        const yellow = tab === "04_04_1";
        const look = active
          ? yellow
            ? "rounded-b-[3px] border-b-4 border-[#e9f77c] bg-white font-medium"
            : "rounded-b-[3px] border-b border-[#a09ea1] bg-white font-semibold text-[#217a3a]"
          : yellow
            ? "border-t-4 border-r border-t-[#e9f77c] border-r-[#cfcdd0]"
            : "border-r border-[#cfcdd0]";
        return (
          <button
            key={tab}
            className={`flex h-[23px] w-[79px] items-start justify-center leading-5 ${look}`}
          >
            <span className={yellow && !active ? "-mt-1" : ""}>{tab}</span>
          </button>
        );
      })}
      <button
        aria-label="Neues Blatt"
        className="flex h-[23px] w-[38px] items-center justify-center border-r border-[#cfcdd0]"
      >
        <svg width="11" height="11" viewBox="0 0 11 11" stroke="#4d4b4e" strokeWidth="1.5">
          <path d="M5.500 0v11M0 5.500h11" />
        </svg>
      </button>
    </div>
  );
}

function StatusBar() {
  return (
    <footer className="flex h-[23px] shrink-0 items-center border-t border-[#8c8a8d] bg-linear-to-b from-[#d5d3d6] to-[#c6c4c7] pr-[25px] pl-[25px] text-xs text-[#454347]">
      Bereit
      <div className="ml-auto flex h-full items-center">
        <button aria-label="Normal" className="flex h-full w-[37px] items-center justify-center bg-[#918f92]">
          <svg width="13" height="13" viewBox="0 0 13 13" fill="none" stroke="#fff">
            <path d="M0.500 0.500h12v12h-12zM0.500 4.500h12M0.500 8.500h12M4.500 0.500v12M8.500 0.500v12" />
          </svg>
        </button>
        <button aria-label="Seitenlayout" className="flex w-9 justify-center">
          <svg width="14" height="13" viewBox="0 0 14 13" fill="none" stroke="#5d5b5e">
            <path d="M1 1h12v11H1z" strokeWidth="1.4" />
            <path d="M4 2.500h6v8H4zM5 4.500h4M5 6.500h4M5 8.500h4" />
          </svg>
        </button>
        <button aria-label="Seitenumbruch" className="flex w-9 justify-center">
          <svg width="14" height="13" viewBox="0 0 14 13" fill="none" stroke="#5d5b5e" strokeWidth="1.3">
            <path d="M1 1h12v11H1zM5 1v6h4V1M1 7h8" />
          </svg>
        </button>
        <button aria-label="Verkleinern" className="ml-[6px] flex w-4">
          <svg width="8" height="3" viewBox="0 0 8 3">
            <path d="M0 0.500h8v2H0z" fill="#5d5b5e" />
          </svg>
        </button>
        <input
          type="range"
          aria-label="Zoom"
          defaultValue={50}
          className="h-1 w-[99px] appearance-none rounded-full bg-[#7d7b7e] [&::-webkit-slider-thumb]:size-3 [&::-webkit-slider-thumb]:appearance-none [&::-webkit-slider-thumb]:rounded-full [&::-webkit-slider-thumb]:bg-white"
        />
        <button aria-label="Vergrößern" className="ml-2">
          <svg width="8" height="8" viewBox="0 0 8 8">
            <path d="M3 0h2v3h3v2H5v3H3V5H0V3h3z" fill="#5d5b5e" />
          </svg>
        </button>
        <span className="w-[51px] text-right">100 %</span>
      </div>
    </footer>
  );
}

function Watermark() {
  return (
    <div className="pointer-events-none absolute right-[18px] bottom-[19px] flex items-center gap-px text-[17px] leading-5 font-bold text-[#dcdadd] [-webkit-text-stroke:1px_#fff] [filter:drop-shadow(0_0_1px_#9a989b)]">
      Linked
      <span className="flex h-5 w-[21px] items-center justify-center border border-white">
        in
      </span>
      <span className="pl-[3px] font-semibold">Learning</span>
    </div>
  );
}

function ExcelWindow({ state }: { state: WindowState }) {
  return (
    <section className="flex min-h-0 flex-1 flex-col bg-[conic-gradient(#1f5fa8_25%,#4a0d35_0_50%,#14163a_0_75%,#c01848_0)]">
      <div className="relative flex min-h-0 flex-1 flex-col overflow-hidden rounded-t-[5px] rounded-b-[10px] bg-[#fdfdfe]">
        <TitleBar />
        <RibbonTabs />
        <Ribbon />
        <FormulaBar nameBox={state.nameBox} formula={state.formula} />
        <div className="relative min-h-0 flex-1 overflow-hidden">
          <Sheet state={state} />
          {state.showChart && <BoxPlot />}
          {state.tip && (
            <div
              role="tooltip"
              className={`absolute border border-[#cccacd] bg-[#ebe9ec] px-[3px] py-px text-[11px] leading-[14px] font-medium whitespace-nowrap text-[#1c1c1e] shadow-[0_4px_9px_rgba(0,0,0,0.35)] ${state.tip.className}`}
            >
              {state.tip.lines.map((line) => (
                <p key={line}>{line}</p>
              ))}
            </div>
          )}
          {state.cursor}
        </div>
        <SheetTabs activeTab={state.activeTab} />
        <StatusBar />
        <Watermark />
      </div>
    </section>
  );
}

const quartileFormula = "=QUARTILE.EXKL(E2:E31;3)-QUARTILE.EXKL(E2:E31;1)";

const windows: WindowState[] = [
  {
    nameBox: "I16",
    formula: quartileFormula,
    firstRow: 1,
    lastRow: 28,
    selected: { col: "I", row: 16 },
    activeTab: "04_04_1",
    showChart: false,
    cursor: <CrossCursor />,
  },
  {
    nameBox: "Y35",
    formula: "",
    firstRow: 4,
    lastRow: 35,
    selected: { col: "Y", row: 35 },
    activeTab: "04_04_2",
    showChart: true,
    tip: {
      lines: [
        'Reihen "Monatliches Einkommen in Euro" Punkt "0"',
        "Wert: 1289,75",
      ],
      className: "top-[461px] left-[1002px] w-[278px]",
    },
    cursor: <ArrowCursor className="top-[438px] left-[1000px]" />,
  },
  {
    nameBox: "I16",
    formula: quartileFormula,
    firstRow: 4,
    lastRow: 35,
    selected: { col: "I", row: 16 },
    activeTab: "04_04_2",
    showChart: true,
    tip: {
      lines: ['Reihen "Monatliches Einkommen in Euro"', "Keine Daten"],
      className: "top-[408px] left-[983px] w-[225px]",
    },
    cursor: <ArrowCursor className="top-[386px] left-[1015px]" />,
  },
];

export default function App() {
  return (
    <main className="flex h-screen flex-col overflow-hidden font-[Inter] text-[#1c1c1e]">
      {windows.map((state, i) => (
        <ExcelWindow key={i} state={state} />
      ))}
    </main>
  );
}
